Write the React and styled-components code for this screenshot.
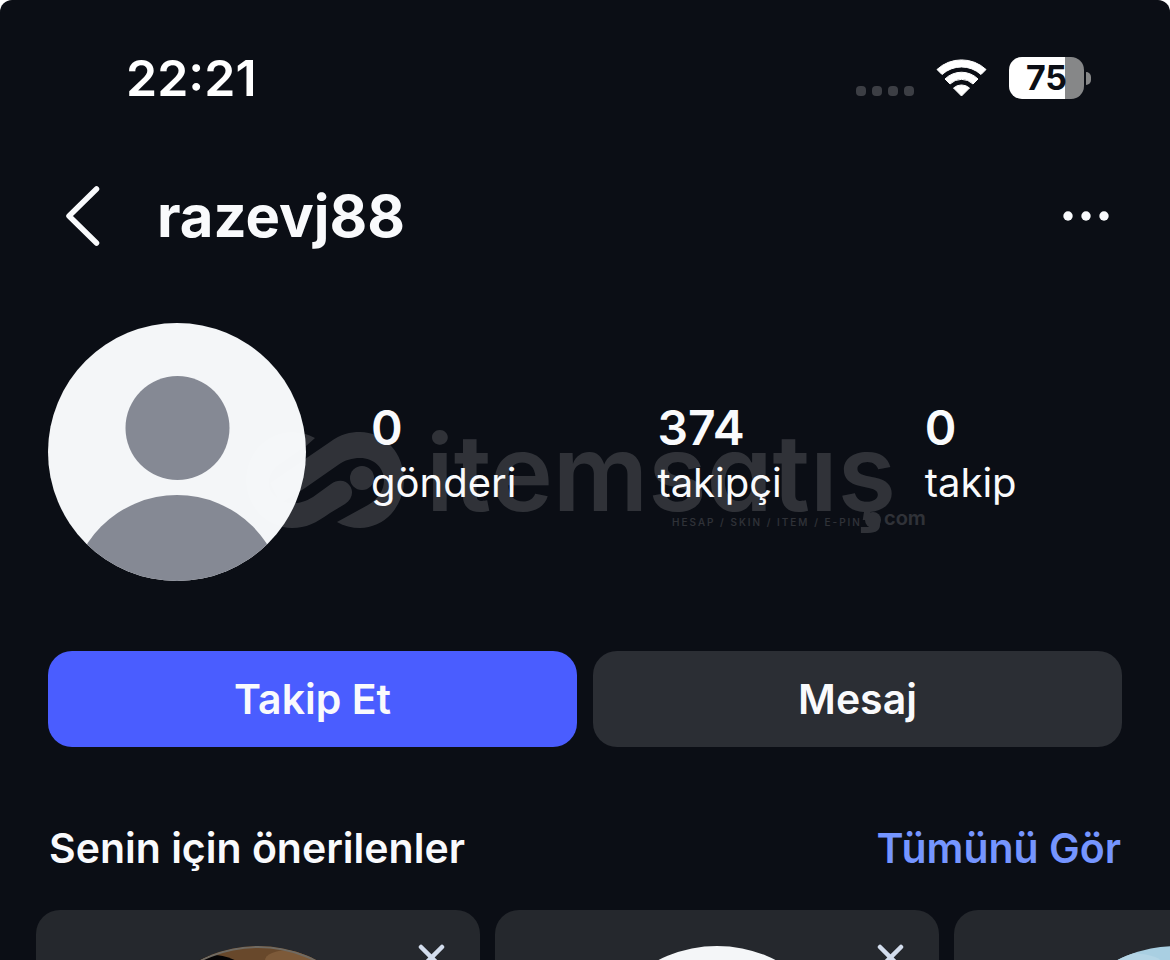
import React from "react";
import styled, { createGlobalStyle } from "styled-components";

const GlobalStyle = createGlobalStyle`
  *, *::before, *::after { box-sizing: border-box; }
  body {
    margin: 0;
    background: #ffffff;
    font-family: Inter, "Liberation Sans", sans-serif;
    color: #f9fafc;
  }
  h1, h2, dl, dt, dd, ul { margin: 0; padding: 0; }
`;

const Page = styled.main`
  height: 100vh;
  overflow: hidden;
  background: #0b0e15;
  border-radius: 12px 12px 0 0;
`;

const StatusBar = styled.div`
  display: flex;
  align-items: center;
  justify-content: space-between;
  padding: 48px 79px 0 126px;
`;

const Clock = styled.time`
  font-size: 50px;
  font-weight: 600;
  line-height: 60px;
  color: #ffffff;
`;

const StatusIcons = styled.div`
  display: flex;
  align-items: center;
  gap: 22px;
`;

const Signal = styled.div`
  display: flex;
  gap: 6px;
  padding-top: 26px;
`;

const SignalDot = styled.span`
  width: 10px;
  height: 10px;
  border-radius: 4px;
  background: #3c3e44;
`;

const Battery = styled.div`
  display: flex;
  align-items: center;
  gap: 2px;
`;

const BatteryBody = styled.div`
  width: 75px;
  border-radius: 13px;
  background: linear-gradient(to right, #ffffff 75%, #868788 75%);
  color: #0b0e15;
  font-size: 34px;
  font-weight: 700;
  line-height: 42px;
  text-align: center;
`;

const BatteryTip = styled.span`
  width: 5px;
  height: 13px;
  border-radius: 0 6px 6px 0;
  background: #868788;
`;

const Header = styled.header`
  display: flex;
  align-items: center;
  gap: 56px;
  padding: 78px 60px 0 65px;
`;

const IconButton = styled.button`
  display: flex;
  padding: 0;
  border: 0;
  background: none;
  color: inherit;
  cursor: pointer;
`;

const Username = styled.h1`
  flex: 1;
  font-size: 58px;
  font-weight: 700;
  line-height: 60px;
`;

const Profile = styled.section`
  position: relative;
  display: flex;
  align-items: center;
  gap: 65px;
  padding: 77px 48px 0;
`;

const Avatar = styled.svg`
  flex: none;
  width: 258px;
  height: 258px;
  border-radius: 50%;
`;

const Watermark = styled.svg`
  position: absolute;
  left: 240px;
  top: 182px;
  width: 700px;
  height: 120px;
  fill: #ffffff;
  opacity: 0.15;
  pointer-events: none;
  font-family: Inter, sans-serif;
  font-feature-settings: "cv11";
`;

const Stats = styled.dl`
  flex: 1;
  display: grid;
  grid-template-columns: 286fr 267fr 197fr;
  padding-top: 6px;
`;

const Stat = styled.div`
  display: flex;
  flex-direction: column-reverse;
`;

const StatLabel = styled.dt`
  font-size: 40px;
  line-height: 54px;
`;

const StatValue = styled.dd`
  font-size: 48px;
  font-weight: 600;
  line-height: 56px;
`;

const Actions = styled.div`
  display: flex;
  gap: 16px;
  padding: 70px 48px 0;
`;

const ActionButton = styled.button`
  flex: 1;
  height: 96px;
  padding: 0;
  border: 0;
  border-radius: 24px;
  background: ${(p) => (p.$primary ? "#4a5dff" : "#2b2e34")};
  color: inherit;
  font-family: inherit;
  font-size: 41px;
  font-weight: 600;
  cursor: pointer;
`;

const SectionHead = styled.div`
  display: flex;
  justify-content: space-between;
  padding: 73px 49px 0;
  font-size: 41px;
  font-weight: 600;
  line-height: 56px;
`;

const SectionTitle = styled.h2`
  font: inherit;
`;

const SeeAll = styled.a`
  color: #7595ff;
  text-decoration: none;
`;

const Cards = styled.ul`
  display: flex;
  gap: 15px;
  padding: 34px 0 0 36px;
  list-style: none;
`;

const Card = styled.li`
  position: relative;
  flex: none;
  display: flex;
  justify-content: center;
  width: 444px;
  padding: 36px 0;
  border-radius: 24px;
  background: #25282d;
`;

const Dismiss = styled(IconButton)`
  position: absolute;
  top: 34px;
  right: 35px;
  color: #d3dded;
`;

function Person() {
  return (
    <>
      <rect width="258" height="258" fill="#f4f6f8" />
      <circle cx="129.5" cy="105" r="52" fill="#858994" />
      <circle cx="129" cy="279" r="107" fill="#858994" />
    </>
  );
}

function BrownPhoto() {
  return (
    <>
      <rect width="258" height="258" fill="#68482b" />
      <ellipse cx="160" cy="14" rx="24" ry="10" fill="#7d5a39" />
      <ellipse cx="84" cy="60" rx="50" ry="51" fill="#050405" />
      <circle cx="129" cy="129" r="128" fill="none" stroke="#6f6a62" strokeWidth="2" />
    </>
  );
}

function SkyPhoto() {
  return (
    <>
      <rect width="258" height="258" fill="#a9cfe2" />
      <ellipse cx="80" cy="16" rx="34" ry="9" fill="#b4d5e6" />
    </>
  );
}

const STATS = [
  { value: "0", label: "gönderi" },
  { value: "374", label: "takipçi" },
  { value: "0", label: "takip" },
];

const SUGGESTIONS = [BrownPhoto, Person, SkyPhoto];

export default function App() {
  return (
    <>
      <GlobalStyle />
      <Page>
        <StatusBar>
          <Clock>22:21</Clock>
          <StatusIcons>
            <Signal>
              <SignalDot />
              <SignalDot />
              <SignalDot />
              <SignalDot />
            </Signal>
            <svg width="51" height="38" viewBox="0 0 51 38" fill="#fff" stroke="#fff" strokeLinejoin="round" aria-hidden="true">
              <path d="M1 10.5A36 36 0 0 1 50 10.5L45 15.5A29 29 0 0 0 6 15.5Z" />
              <path d="M9 20A23.500 23.500 0 0 1 42 20L37 25A16.500 16.500 0 0 0 14 25Z" />
              <path d="M17.500 29A12 12 0 0 1 33.500 29L25.500 37Z" />
            </svg>
            <Battery>
              <BatteryBody>75</BatteryBody>
              <BatteryTip />
            </Battery>
          </StatusIcons>
        </StatusBar>

        <Header>
          <IconButton aria-label="Geri">
            <svg width="36" height="60" viewBox="0 0 36 60" fill="none" stroke="currentColor" strokeWidth="5.500" strokeLinecap="round" strokeLinejoin="round">
              <path d="M31.500 3L4 30L31.500 57" />
            </svg>
          </IconButton>
          <Username>razevj88</Username>
          <IconButton aria-label="Seçenekler">
            <svg width="48" height="12" viewBox="0 0 48 12" fill="currentColor">
              <circle cx="6" cy="6" r="4.700" />
              <circle cx="24" cy="6" r="4.700" />
              <circle cx="42" cy="6" r="4.700" />
            </svg>
          </IconButton>
        </Header>

        <Profile>
          <Avatar viewBox="0 0 258 258" aria-hidden="true">
            <Person />
          </Avatar>
          <Watermark viewBox="240 428 700 120">
            <path d="M315 438C308 434 300 432 292 432A46 48 0 0 0 246 480A46 48 0 0 0 292 528C306 528 316 523 330 513L345 504C352 499 354 492 350 486C346 480 338 479 331 484L313 497C300 505 290 504 283 501C268 495 264 480 276 467L306 446Z" />
            <path d="M280 504L305 488L338 465C345 460 352 458 360 458C374 458 384 468 384 480C384 491 378 499 368 505L337 522C344 526 352 528 360 528A44 48 0 0 0 404 480A44 48 0 0 0 360 432C350 432 341 434 330 442L270 483Z" />
            <circle cx="362" cy="478" r="12" />
            <text x="426" y="511" fontSize="106" fontWeight="600">itemsatış</text>
            <text x="672" y="526" fontSize="10" fontWeight="500" letterSpacing="2">HESAP / SKIN / ITEM / E-PIN</text>
            <circle cx="873" cy="520" r="8" />
            <text x="884" y="525" fontSize="20" fontWeight="600">com</text>
          </Watermark>
          <Stats>
            {STATS.map((s) => (
              <Stat key={s.label}>
                <StatLabel>{s.label}</StatLabel>
                <StatValue>{s.value}</StatValue>
              </Stat>
            ))}
          </Stats>
        </Profile>

        <Actions>
          <ActionButton $primary>Takip Et</ActionButton>
          <ActionButton>Mesaj</ActionButton>
        </Actions>

        <SectionHead>
          <SectionTitle>Senin için önerilenler</SectionTitle>
          <SeeAll href="#suggestions">Tümünü Gör</SeeAll>
        </SectionHead>

        <Cards id="suggestions">
          {SUGGESTIONS.map((Photo, i) => (
            <Card key={i}>
              <Avatar viewBox="0 0 258 258" aria-hidden="true">
                <Photo />
              </Avatar>
              <Dismiss aria-label="Kaldır">
                <svg width="27" height="27" viewBox="0 0 27 27" stroke="currentColor" strokeWidth="4.500" strokeLinecap="round">
                  <path d="M3 3L24 24M24 3L3 24" />
                </svg>
              </Dismiss>
            </Card>
          ))}
        </Cards>
      </Page>
    </>
  );
}
